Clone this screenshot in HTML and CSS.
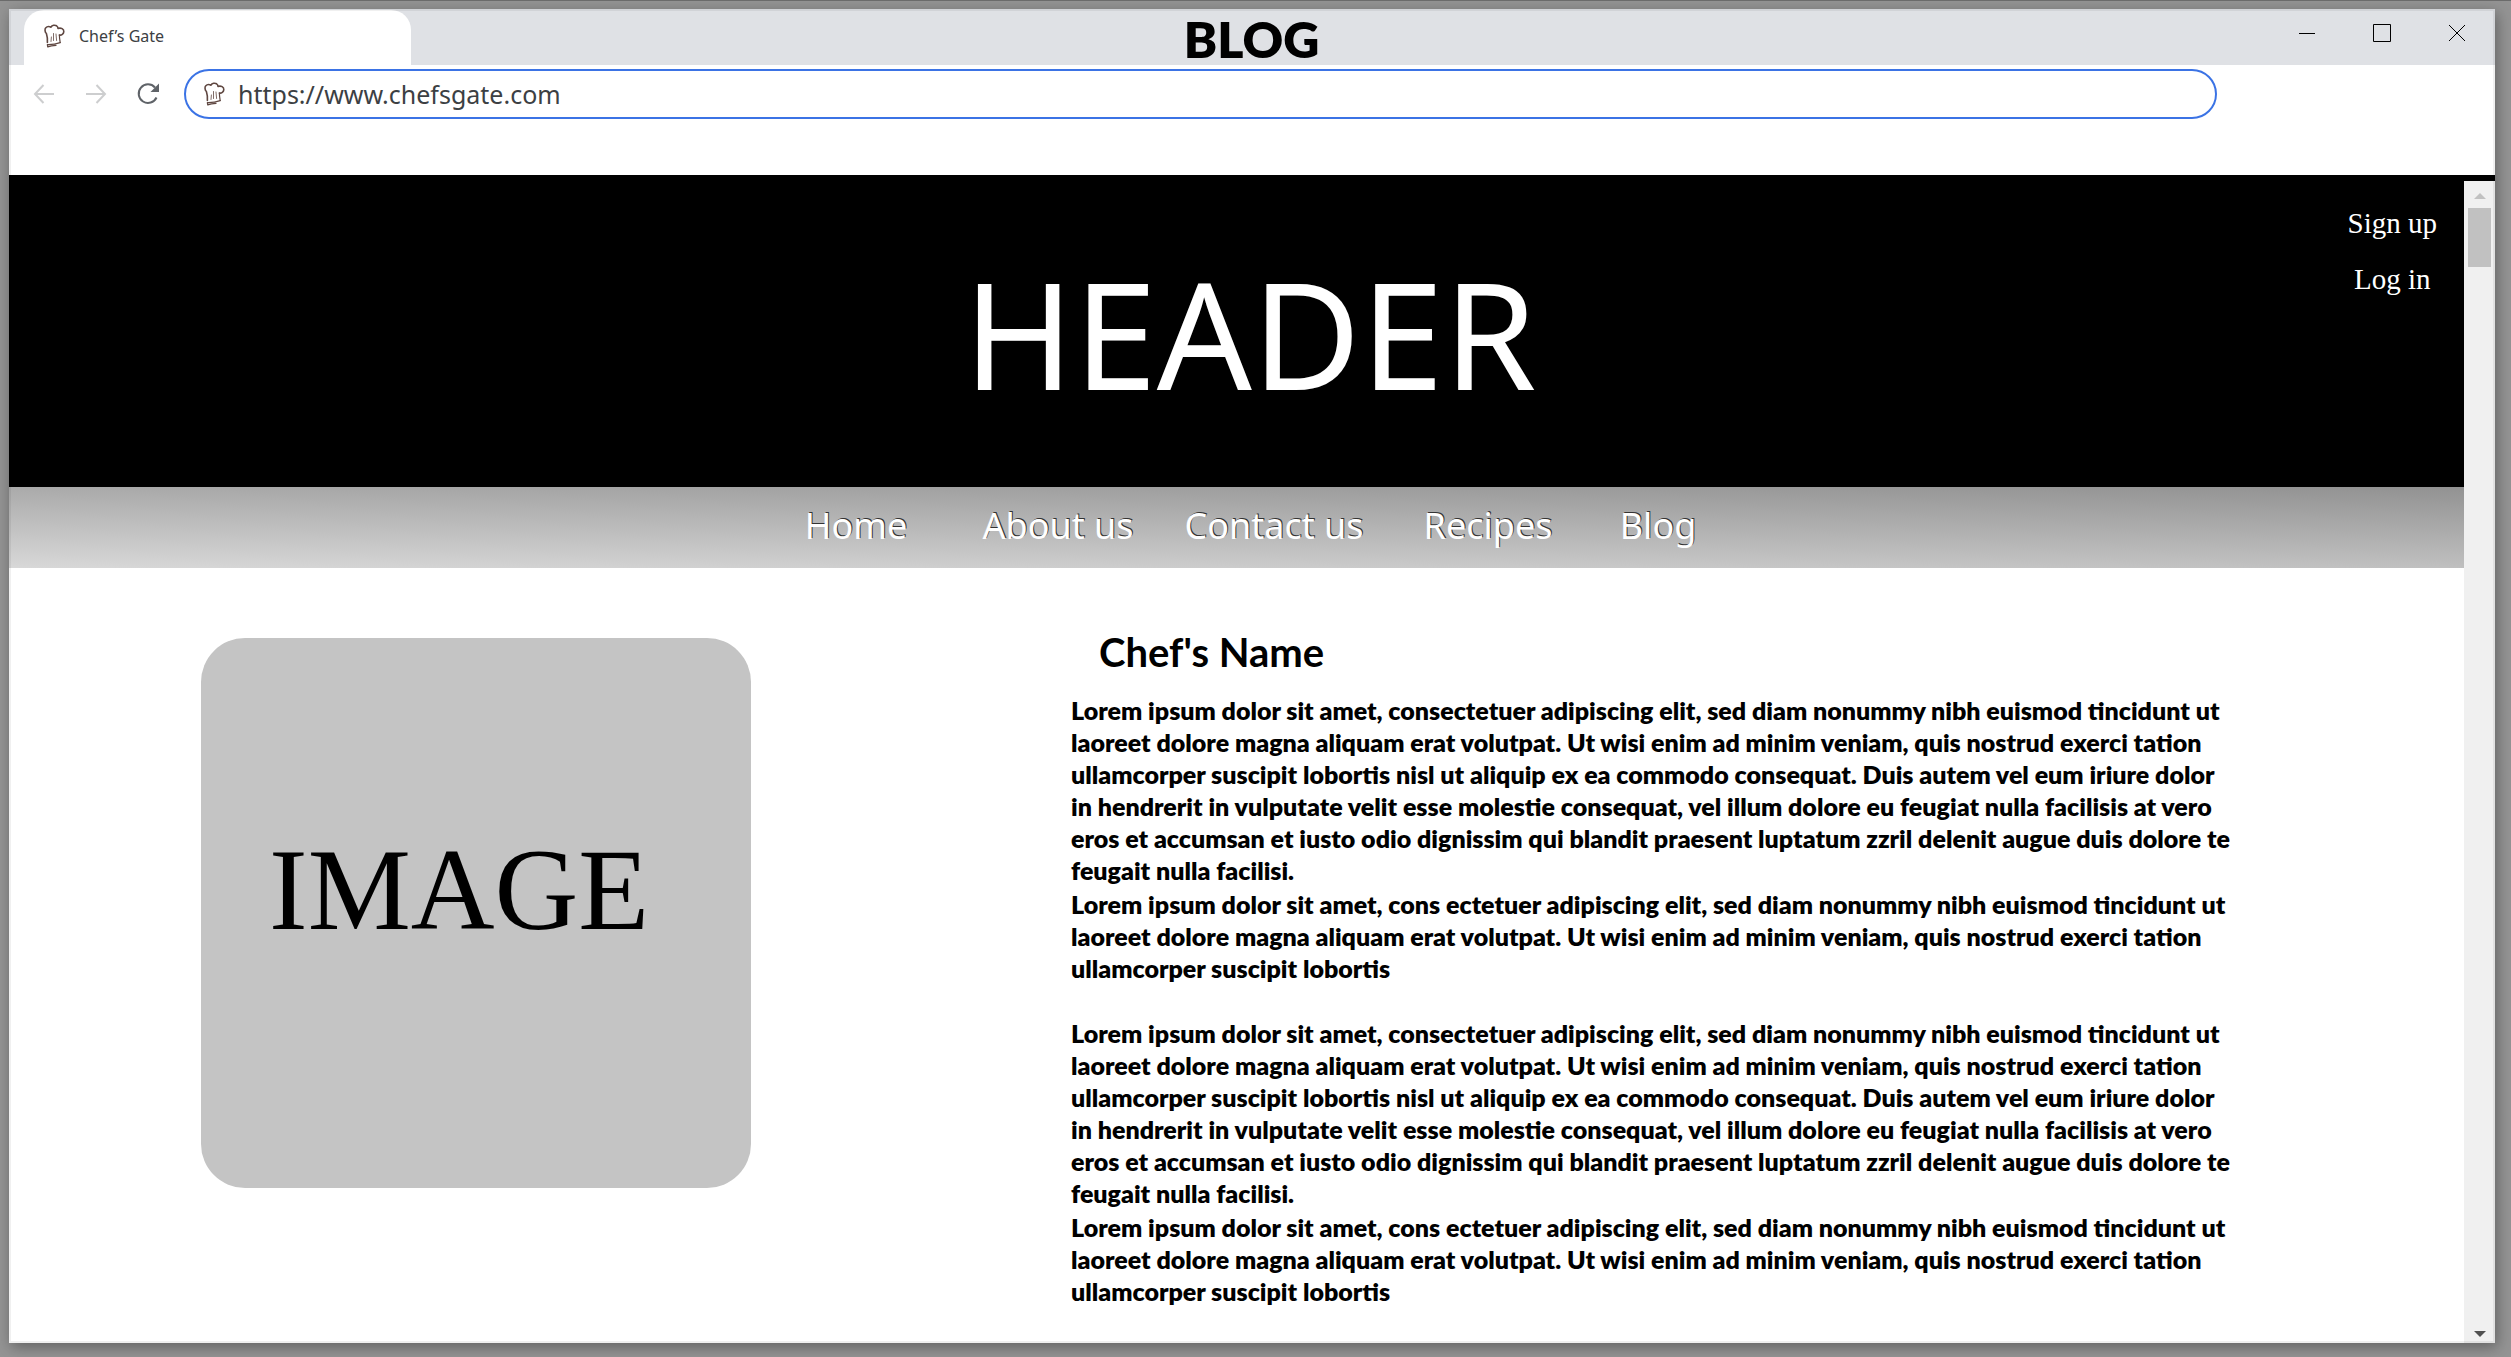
FILE: index.html
```html
<!DOCTYPE html>
<html lang="en">
<head>
<meta charset="utf-8">
<title>Chef's Gate</title>
<link rel="stylesheet" href="styles.css">
</head>
<body>
<svg class="defs" aria-hidden="true">
  <symbol id="hat" viewBox="0 0 21 24">
    <g fill="none" stroke="#5f4741" stroke-linecap="round" stroke-linejoin="round">
      <path stroke-width="1.6" d="M3.400 18.500C3.600 15 3.200 12 2.400 9.500C.8 8 .7 5 1.600 4C3 2.400 5 2.200 7 3.200C8 1 11 .8 12.600 1.800C13.800 2.600 14 3.600 14 4.400C17 3.400 20 5 19.800 7.600C19.600 10 17.500 11.400 15.400 11"/>
      <path stroke-width="1.200" d="M15.400 11C15.400 14 15.800 16 16.200 18.500"/>
      <path stroke-width="1.300" d="M3.400 20.600Q10 20.800 16.200 18.600M3.400 20.600L3.800 22.900Q7 21.600 12 21.400"/>
      <path stroke-width=".8" d="M7 17.500L7.400 13M9.500 16.500V9.500M12 10L12.600 16.500"/>
    </g>
  </symbol>
</svg>
<div class="window">
  <div class="tabstrip">
    <div class="tab"><svg class="hat"><use href="#hat"/></svg><span>Chef’s Gate</span></div>
    <h1 class="title">BLOG</h1>
    <div class="controls">
      <button aria-label="Minimize"><svg viewBox="0 0 20 20"><path d="M2 10.500H18"/></svg></button>
      <button aria-label="Maximize"><svg viewBox="0 0 20 20"><path d="M1.500 1.500H18.500V18.500H1.500Z"/></svg></button>
      <button aria-label="Close"><svg viewBox="0 0 20 20"><path d="M2 2L18 18M18 2L2 18"/></svg></button>
    </div>
  </div>
  <div class="toolbar">
    <div class="history">
      <button aria-label="Back"><svg viewBox="0 0 24 24"><path class="dim" d="M22 12H3M11.500 3L3 12L11.500 21"/></svg></button>
      <button aria-label="Forward"><svg viewBox="0 0 24 24"><path class="dim" d="M2 12H21M12.500 3L21 12L12.500 21"/></svg></button>
      <button aria-label="Reload"><svg viewBox="0 0 24 24"><path class="reload" d="M20.500 15.500A9.300 9.300 0 1 1 19 5.500"/><path class="tip" d="M23 1.500V10H14.500Z"/></svg></button>
    </div>
    <label class="omnibox"><svg class="hat"><use href="#hat"/></svg><input type="text" value="https://www.chefsgate.com" aria-label="Address"></label>
  </div>
  <div class="viewport">
    <div class="page">
      <header class="banner">
        <div class="banner-name">HEADER</div>
        <div class="account"><a href="#signup">Sign up</a><a href="#login">Log in</a></div>
      </header>
      <nav class="menu">
        <a href="#home">Home</a><a href="#about">About us</a><a href="#contact">Contact us</a><a href="#recipes">Recipes</a><a href="#blog">Blog</a>
      </nav>
      <main class="content">
        <div class="picture">IMAGE</div>
        <article class="bio">
          <h2>Chef's Name</h2>
          <section>
            <p>Lorem ipsum dolor sit amet, consectetuer adipiscing elit, sed diam nonummy nibh euismod tincidunt ut<br>laoreet dolore magna aliquam erat volutpat. Ut wisi enim ad minim veniam, quis nostrud exerci tation<br>ullamcorper suscipit lobortis nisl ut aliquip ex ea commodo consequat. Duis autem vel eum iriure dolor<br>in hendrerit in vulputate velit esse molestie consequat, vel illum dolore eu feugiat nulla facilisis at vero<br>eros et accumsan et iusto odio dignissim qui blandit praesent luptatum zzril delenit augue duis dolore te<br>feugait nulla facilisi.</p>
            <p>Lorem ipsum dolor sit amet, cons ectetuer adipiscing elit, sed diam nonummy nibh euismod tincidunt ut<br>laoreet dolore magna aliquam erat volutpat. Ut wisi enim ad minim veniam, quis nostrud exerci tation<br>ullamcorper suscipit lobortis</p>
          </section>
          <section>
            <p>Lorem ipsum dolor sit amet, consectetuer adipiscing elit, sed diam nonummy nibh euismod tincidunt ut<br>laoreet dolore magna aliquam erat volutpat. Ut wisi enim ad minim veniam, quis nostrud exerci tation<br>ullamcorper suscipit lobortis nisl ut aliquip ex ea commodo consequat. Duis autem vel eum iriure dolor<br>in hendrerit in vulputate velit esse molestie consequat, vel illum dolore eu feugiat nulla facilisis at vero<br>eros et accumsan et iusto odio dignissim qui blandit praesent luptatum zzril delenit augue duis dolore te<br>feugait nulla facilisi.</p>
            <p>Lorem ipsum dolor sit amet, cons ectetuer adipiscing elit, sed diam nonummy nibh euismod tincidunt ut<br>laoreet dolore magna aliquam erat volutpat. Ut wisi enim ad minim veniam, quis nostrud exerci tation<br>ullamcorper suscipit lobortis</p>
          </section>
        </article>
      </main>
    </div>
    <div class="scrollbar">
      <svg class="arrow" viewBox="0 0 12 6"><path fill="#c1c1c1" d="M0 6L6 0L12 6Z"/></svg>
      <div class="thumb"></div>
      <svg class="arrow" viewBox="0 0 12 6"><path fill="#505050" d="M0 0H12L6 6Z"/></svg>
    </div>
  </div>
</div>
</body>
</html>
```

FILE: styles.css
```css
* { box-sizing: border-box; }
html { height: 100%; }
body {
  margin: 0;
  min-height: 100%;
  padding: 8px 16px 14px 9px;
  display: flex;
  background: #949494;
  border-top: 1px solid #6b6b6b;
  font-family: "Noto Sans", "Open Sans", sans-serif;
}
button { border: 0; padding: 0; background: none; display: flex; align-items: center; justify-content: center; }
a { color: inherit; text-decoration: none; }
.defs { display: none; }

.window {
  position: relative;
  flex: 1;
  min-width: 0;
  display: flex;
  flex-direction: column;
  background: #fff;
  box-shadow: 2px 4px 14px rgba(0, 0, 0, .35);
}
/* Translucent frame drawn over the window edge */
.window::after {
  content: "";
  position: absolute;
  inset: 0;
  border: 2px solid rgba(0, 0, 0, .06);
  pointer-events: none;
}

.tabstrip {
  display: grid;
  grid-template-columns: 1fr auto 1fr;
  height: 56px;
  padding: 1px 16px 0 15px;
  background: #dfe1e5;
}
.tab {
  display: flex;
  align-items: center;
  gap: 14px;
  width: 387px;
  padding: 0 20px 6px;
  background: #fff;
  border-radius: 20px 20px 0 0;
  color: #3c4043;
  font-size: 16px;
}
.hat { width: 21px; height: 24px; flex: none; }
.title {
  margin: 0;
  font: 800 50px/58px Lato, sans-serif;
  color: #000;
}
.controls { display: flex; justify-content: flex-end; gap: 30px; height: 46px; }
.controls button { width: 45px; }
.controls svg { width: 20px; height: 20px; fill: none; stroke: #000; stroke-width: 1; }

.toolbar {
  display: flex;
  align-items: center;
  gap: 24px;
  height: 110px;
  padding: 4px 278px 56px 23px;
}
.history { display: flex; gap: 28px; }
.history svg { width: 24px; height: 24px; fill: none; }
.dim { stroke: #cdcecf; stroke-width: 2; }
.reload { stroke: #5f6368; stroke-width: 2; }
.tip { fill: #5f6368; }
.omnibox {
  flex: 1;
  display: flex;
  align-items: center;
  gap: 13px;
  height: 50px;
  padding: 0 18px;
  border: 2px solid #3b73e5;
  border-radius: 25px;
}
.omnibox input {
  flex: 1;
  min-width: 0;
  padding: 0;
  border: 0;
  outline: 0;
  background: none;
  color: #3c4043;
  font: 25px/36px "Noto Sans", sans-serif;
}

.viewport { flex: 1; display: flex; border-top: 6px solid #000; }
.page { flex: 1; min-width: 0; }
.banner {
  display: grid;
  grid-template-columns: 1fr auto 1fr;
  height: 306px;
  padding: 14px 27px 0 54px;
  background: #000;
  color: #fff;
}
.banner-name { grid-column: 2; font-size: 149px; line-height: 276px; }
.account {
  display: flex;
  flex-direction: column;
  align-items: center;
  justify-self: end;
  font: 29px/56px "Liberation Serif", serif;
}
.menu {
  display: grid;
  grid-template-columns: 180px 224px 208px 220px 120px;
  justify-content: center;
  height: 81px;
  padding-left: 11px;
  background: linear-gradient(181deg, #929292, #d8d8d8);
  color: #fff;
  font-size: 36px;
  line-height: 78px;
  text-align: center;
  text-shadow: 1px -1px 0 #333;
}
.content {
  display: flex;
  gap: 320px;
  padding: 70px 192px 0;
  color: #000;
}
.picture {
  flex: none;
  width: 550px;
  height: 550px;
  padding: 0 0 46px 68px;
  display: flex;
  align-items: center;
  border-radius: 44px;
  background: #c4c4c4;
  font: 116px/140px "Liberation Serif", serif;
}
.bio { font: 800 25px/32px Lato, sans-serif; white-space: nowrap; }
.bio h2 { margin: -10px 0 18px 28px; font-size: 40px; line-height: 48px; }
.bio p { margin: 0 0 2px; }
.bio section { margin-bottom: 33px; }
.bio section:last-child { margin-bottom: 0; }

.scrollbar {
  width: 31px;
  display: flex;
  flex-direction: column;
  align-items: center;
  padding: 12px 0 6px;
  background: #f0f0f0;
}
.arrow { width: 12px; height: 6px; }
.thumb { width: 23px; height: 59px; margin: 9px 0 auto; background: #c1c1c1; }
```
